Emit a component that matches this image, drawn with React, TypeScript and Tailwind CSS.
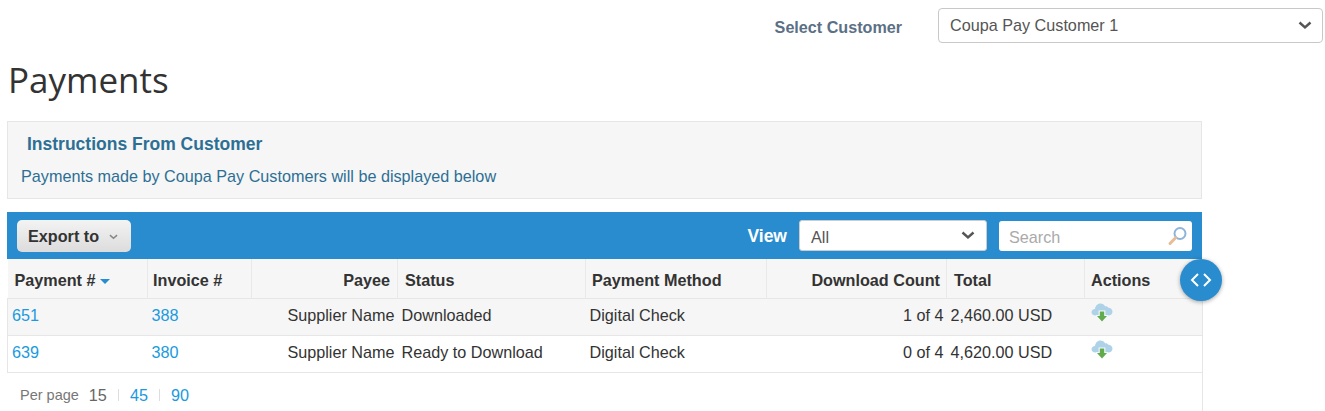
import React from "react";

const Chevron = ({ className = "" }: { className?: string }) => (
  <svg width="14" height="9" viewBox="0 0 14 9" className={className}>
    <path d="M1.5 1.5 L7 6.5 L12.5 1.5" fill="none" stroke="currentColor" strokeWidth="2.4" />
  </svg>
);

const CloudIcon = () => (
  <svg width="22" height="19" viewBox="0 0 22 19">
    <path d="M4.5 12.5 C2 12.5 0.5 11 0.5 9.2 C0.5 7.4 2 6 4 6 C4.4 2.8 6.6 0.5 9.4 0.5 C11.6 0.5 13.2 1.6 14.2 3.4 C15.2 3 16.4 3.4 17 4.6 C19.6 4.8 21.5 6.6 21.5 8.8 C21.5 11 19.6 12.5 17.5 12.5 Z" fill="#aed2e8" />
    <path d="M7.6 7.6 H14.4 V12 H17.4 L11 19 L4.6 12 H7.6 Z" fill="#f4f8fb" />
    <path d="M8.8 8.6 H13.2 V13 H16 L11 18.4 L6 13 H8.8 Z" fill="#62ab4d" />
  </svg>
);

const SearchIcon = () => (
  <svg width="22" height="22" viewBox="0 0 22 22">
    <circle cx="13" cy="8.5" r="5.5" fill="#fff" stroke="#8fb4d9" strokeWidth="2" />
    <path d="M8.6 12.8 L3 18.5" stroke="#e8bd95" strokeWidth="3" strokeLinecap="round" />
  </svg>
);

const rows = [
  { id: "651", inv: "388", status: "Downloaded", count: "1 of 4", total: "2,460.00 USD", bg: "bg-[#f6f6f6]" },
  { id: "639", inv: "380", status: "Ready to Download", count: "0 of 4", total: "4,620.00 USD", bg: "bg-white" },
];

const headers: [string, string][] = [
  ["Payment #", "text-left pl-[7px]"],
  ["Invoice #", "text-left pl-[5px]"],
  ["Payee", "text-right pr-[7px]"],
  ["Status", "text-left pl-[7px]"],
  ["Payment Method", "text-left pl-[6px]"],
  ["Download Count", "text-right pr-[6px]"],
  ["Total", "text-left pl-[7px]"],
  ["Actions", "text-left pl-[6px]"],
];

export default function App() {
  return (
    <div className="relative h-[411px] w-[1325px] overflow-hidden bg-white font-['Liberation_Sans',Arial,sans-serif] text-[16.2px] text-[#333]">
      <div className="flex h-[51px] items-start justify-end pr-[2px] pt-[8px]">
        <span className="mr-[36px] mt-[10px] text-[16.15px] font-bold leading-[18px] text-[#5b7085]">Select Customer</span>
        <div className="flex h-[35px] w-[385px] items-center justify-between rounded-[4px] border border-[#c8c8c8] bg-white pl-[11px] pr-[10px] text-[#555]">
          <span>Coupa Pay Customer 1</span>
          <Chevron className="text-[#555]" />
        </div>
      </div>

      <h1 className="ml-[8px] h-[70px] pt-[6px] font-['Open_Sans',sans-serif] text-[35px] font-normal leading-[46px] text-[#333]">Payments</h1>

      <div className="ml-[7px] h-[78px] w-[1195px] border border-[#e6e6e6] bg-[#f6f6f6] text-[#2d6f94]">
        <div className="pl-[19px] pt-[12px] text-[17.5px] font-bold leading-[20px]">Instructions From Customer</div>
        <div className="pl-[13px] pt-[12px] leading-[20px]">Payments made by Coupa Pay Customers will be displayed below</div>
      </div>

      <div className="ml-[7px] mt-[13px] w-[1195px]">
        <div className="flex h-[47px] items-center justify-between bg-[#288ccf] pl-[10px] pr-[10px]">
          <button className="flex h-[32px] w-[114px] items-center rounded-[5px] bg-gradient-to-b from-[#f3f3f3] to-[#dcdcdc] pl-[11px] pt-[1px] font-bold text-[#333]">
            Export to
            <Chevron className="ml-[10px] mt-[2px] h-[6px] w-[9px] text-[#888]" />
          </button>
          <div className="flex items-center">
            <span className="mr-[12px] pt-[2px] text-[17.5px] font-bold text-white">View</span>
            <div className="flex h-[31px] w-[188px] items-center justify-between rounded-[3px] border border-[#ccc] bg-white pl-[11px] pr-[11px] text-[#555]">
              <span className="pt-[3px]">All</span>
              <Chevron className="text-[#555]" />
            </div>
            <div className="ml-[12px] flex h-[30px] w-[193px] items-center justify-between rounded-[3px] bg-white pl-[10px] pr-[3px] text-[#aaa]">
              <span className="pt-[3px]">Search</span>
              <SearchIcon />
            </div>
          </div>
        </div>

        <table className="w-[1195px] table-fixed border-collapse">
          <colgroup>
            <col className="w-[140px]" />
            <col className="w-[104px]" />
            <col className="w-[146px]" />
            <col className="w-[188px]" />
            <col className="w-[181px]" />
            <col className="w-[180px]" />
            <col className="w-[138px]" />
            <col className="w-[118px]" />
          </colgroup>
          <thead>
            <tr className="h-[39px] border-b border-[#e6e6e6] bg-[#f6f6f6] text-[#333]">
              {headers.map(([label, align], i) => (
                <th key={label} className={`border-l border-[#e9e9e9] pt-[3px] font-bold first:border-l-0 ${align}`}>
                  {label}
                  {i === 0 && <span className="ml-[5px] inline-block translate-y-[-2px] border-x-[5px] border-t-[5px] border-x-transparent border-t-[#288ccf]" />}
                </th>
              ))}
            </tr>
          </thead>
          <tbody>
            {rows.map((r) => (
              <tr key={r.id} className={`h-[37px] border-b border-[#e6e6e6] ${r.bg}`}>
                <td className="border-l border-[#e6e6e6] pb-[3px] pl-[4px] text-[#1a9ae0]">{r.id}</td>
                <td className="pb-[3px] pl-[4px] text-[#1a9ae0]">{r.inv}</td>
                <td className="pb-[3px] pr-[3px] text-right">Supplier Name</td>
                <td className="pb-[3px] pl-[4px]">{r.status}</td>
                <td className="pb-[3px] pl-[4px]">Digital Check</td>
                <td className="pb-[3px] pr-[3px] text-right">{r.count}</td>
                <td className="pb-[3px] pl-[4px]">{r.total}</td>
                <td className="pl-[6px] align-top"><span className="mt-[4px] block"><CloudIcon /></span></td>
              </tr>
            ))}
          </tbody>
        </table>

        <div className="flex items-center pl-[13px] pt-[10px] text-[#333]">
          <span className="mr-[10px] pt-[2px] text-[14.5px] text-[#777]">Per page</span>
          <span className="text-[#666]">15</span>
          <span className="mx-[11px] h-[12px] w-px bg-[#ddd]" />
          <span className="text-[#1a9ae0]">45</span>
          <span className="mx-[11px] h-[12px] w-px bg-[#ddd]" />
          <span className="text-[#1a9ae0]">90</span>
        </div>
      </div>

      <div className="absolute bottom-0 left-[1202px] top-[298px] w-px bg-[#e6e6e6]" />

      <div className="absolute left-[1180px] top-[259px] flex h-[42px] w-[42px] items-center justify-center rounded-full bg-[#288ccf] shadow-[0_1px_4px_rgba(0,0,0,0.35)]">
        <svg width="22" height="14" viewBox="0 0 22 14">
          <path d="M8 1 L2 7 L8 13 M14 1 L20 7 L14 13" fill="none" stroke="#fff" strokeWidth="2" />
        </svg>
      </div>
    </div>
  );
}
